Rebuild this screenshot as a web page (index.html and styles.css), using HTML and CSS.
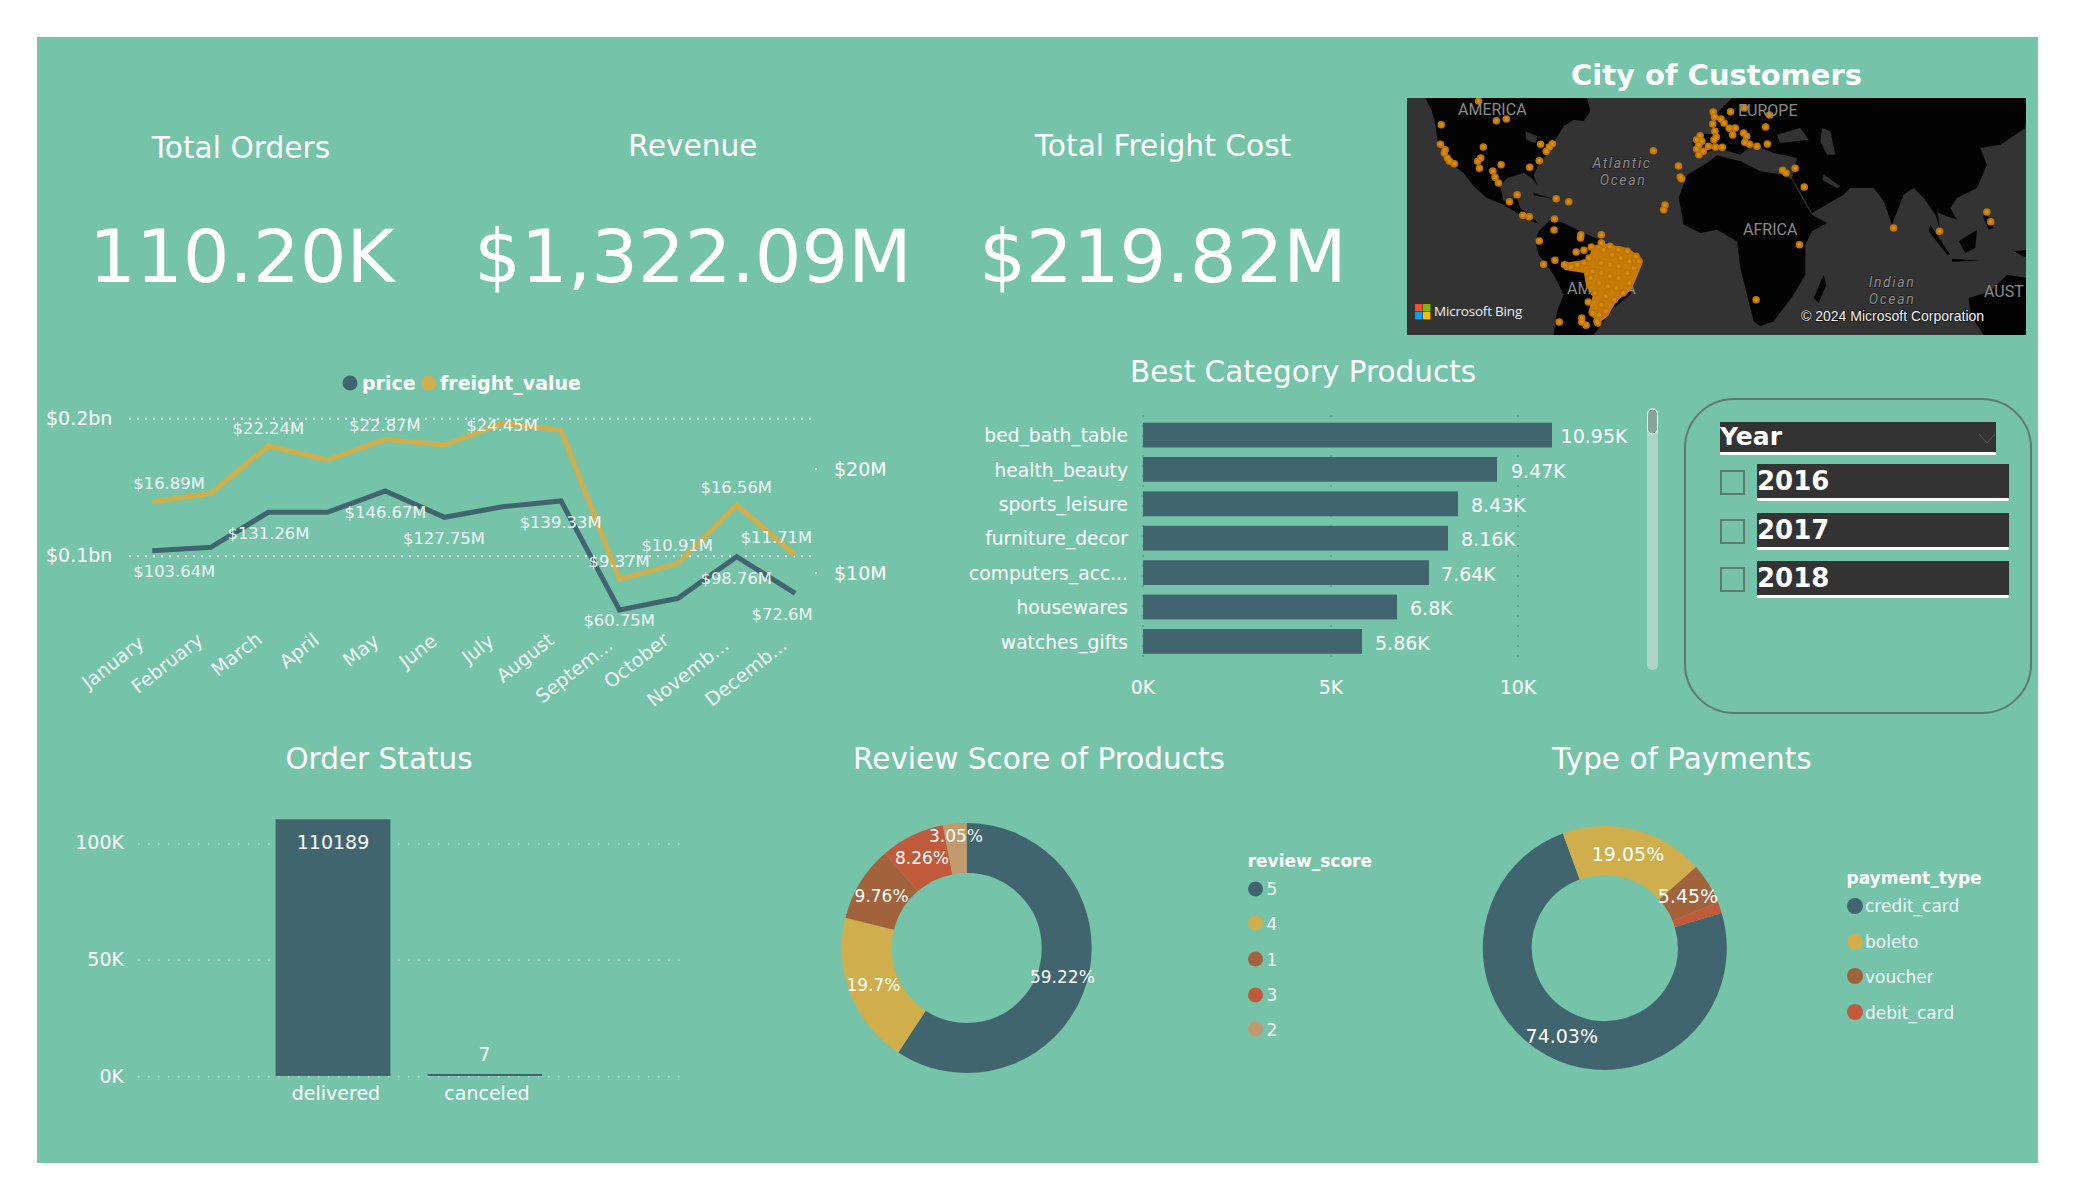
FILE: index.html
```html
<!DOCTYPE html>
<html lang="en">
<head>
<meta charset="utf-8">
<title>Sales dashboard</title>
<link rel="stylesheet" href="styles.css">
</head>
<body>
<main class="report">

  <section class="row row-top">
    <div class="kpi kpi-orders"><h3 class="kpi-label">Total Orders</h3><div class="kpi-value">110.20K</div></div>
    <div class="kpi kpi-revenue"><h3 class="kpi-label">Revenue</h3><div class="kpi-value">$1,322.09M</div></div>
    <div class="kpi kpi-freight"><h3 class="kpi-label">Total Freight Cost</h3><div class="kpi-value">$219.82M</div></div>
    <div class="map-col">
      <h2 class="map-title">City of Customers</h2>
      <svg class="map" viewBox="0 0 619 237" width="619" height="237">
        <defs>
          <path id="dots" d="M227 214h.1M268 273h.1M291 268h.1M141 285h.1M139 344h.1M150 360h.1M148 370h.1M155 385h.1M160 395h.1M171 402h.1M238 352h.1M370 344h.1M397 342h.1M390 352h.1M383 365h.1M367 393h.1M345 413h.1M279 405h.1M232 385h.1M225 395h.1M229 416h.1M260 424h.1M265 443h.1M273 460h.1M316 495h.1M298 516h.1M329 557h.1M344 561h.1M406 507h.1M435 516h.1M402 568h.1M401 601h.1M367 634h.1M463 615h.1M462 625h.1M510 615h.1M452 667h.1M377 704h.1M403 692h.1M630 363h.1M688 409h.1M692 442h.1M695 447h.1M657 526h.1M654 540h.1M768 247h.1M771 262h.1M786 268h.1M793 280h.1M767 283h.1M808 246h.1M840 235h.1M898 256h.1M889 292h.1M805 296h.1M819 295h.1M772 305h.1M838 310h.1M845 320h.1M813 316h.1M775 322h.1M770 330h.1M893 343h.1M869 350h.1M852 344h.1M841 338h.1M789 353h.1M773 352h.1M757 350h.1M738 318h.1M730 330h.1M742 335h.1M735 345h.1M730 358h.1M745 365h.1M735 375h.1M928 422h.1M936 430h.1M957 416h.1M978 472h.1M1184 595h.1M1290 605h.1M1399 547h.1M1408 576h.1M967 645h.1M867 810h.1M413 877h.1M465 865h.1M465 877h.1M475 887h.1M502 880h.1M480 817h.1M425 705h.1M440 712h.1M455 705h.1M470 700h.1M487 652h.1M470 662h.1M482 685h.1M510 640h.1M530 650h.1M550 660h.1M570 665h.1M590 680h.1M597 695h.1M585 715h.1M515 660h.1M535 675h.1M555 685h.1M575 695h.1M510 700h.1M530 705h.1M550 710h.1M570 730h.1M490 725h.1M510 730h.1M530 740h.1M550 745h.1M575 760h.1M485 745h.1M505 760h.1M525 770h.1M545 775h.1M560 790h.1M495 790h.1M520 800h.1M540 810h.1M510 825h.1M490 850h.1M505 855h.1M520 845h.1M500 875h.1"/>
        </defs>
        <rect class="sea" width="619" height="237"/>
        <g class="land-group" transform="scale(.33333)">
          <polygon class="land" points="55,0 540,0 550,40 530,70 500,65 470,85 445,125 425,165 400,190 380,230 390,262 375,240 350,225 300,240 280,265 290,310 330,300 340,330 375,355 395,378 375,370 330,345 290,320 240,300 200,265 170,225 135,200 110,165 92,130 85,80 75,40"/>
          <polygon class="land" points="395,400 430,365 470,375 530,405 590,430 690,465 705,490 670,590 620,630 590,670 560,711 440,711 450,640 470,590 440,530 395,470 385,430"/>
          <polygon class="land" points="815,300 840,230 900,195 930,172 1000,190 1060,220 1130,230 1155,245 1190,310 1215,350 1260,375 1215,400 1195,440 1195,530 1160,590 1100,670 1060,685 1040,670 1000,510 990,430 930,395 880,405 830,380"/>
          <polygon class="land" points="855,135 875,105 925,110 915,60 945,30 975,0 1860,0 1855,90 1780,140 1720,150 1740,200 1710,270 1650,300 1630,330 1650,365 1620,355 1595,345 1590,330 1600,400 1585,350 1550,300 1520,270 1490,290 1455,380 1430,310 1400,270 1330,270 1310,290 1215,345 1190,300 1155,240 1170,180 1100,165 1040,140 1000,170 930,150 870,178"/>
          <polygon class="land" points="1685,600 1750,580 1800,530 1860,540 1860,711 1730,711 1690,650"/>
          <polygon class="land" points="1220,600 1250,530 1258,560 1235,615"/>
          <polygon class="land" points="1570,380 1630,470 1620,470 1565,400"/>
          <polygon class="land" points="1655,430 1710,395 1705,450 1675,465"/>
          <polygon class="land" points="1635,482 1720,488 1635,491"/>
          <polygon class="land" points="1730,330 1760,390 1745,395 1730,360"/>
          <polygon class="land" points="1820,460 1860,455 1860,480"/>
          <polygon class="land" points="380,285 450,305 380,292"/>
          <polygon class="gulf" points="1110,110 1180,90 1205,125 1120,135"/>
          <polygon class="gulf" points="1245,90 1270,100 1285,170 1260,170 1240,130"/>
          <polygon class="gulf" points="1250,230 1300,265 1290,270 1245,245"/>
          <polygon class="gulf" points="355,100 392,115 385,135 358,125"/>
        </g>
        <text class="map-label" x="160" y="190">AMERICA</text>
        <g transform="scale(.43365 .33333) translate(-62 -205)">
          <polygon class="brazil" points="515,640 570,655 600,680 605,700 580,780 545,815 525,860 505,880 480,850 490,800 475,770 470,730 425,720 420,700 450,695 480,690 490,650"/>
          <use href="#dots" class="dot-rim"/>
          <use href="#dots" class="dot-core"/>
        </g>
        <text class="map-label" x="51" y="11">AMERICA</text>
        <text class="map-label" x="331" y="12">EUROPE</text>
        <text class="map-label" x="336" y="131">AFRICA</text>
        <text class="map-label" x="577" y="193">AUST</text>
        <text class="map-ocean" x="215" y="65">Atlantic</text>
        <text class="map-ocean" x="216" y="82">Ocean</text>
        <text class="map-ocean" x="485" y="184">Indian</text>
        <text class="map-ocean" x="485" y="201">Ocean</text>
        <rect class="ms-r" x="8" y="206" width="7.4" height="7.4"/>
        <rect class="ms-g" x="16" y="206" width="7.4" height="7.4"/>
        <rect class="ms-b" x="8" y="214" width="7.4" height="7.4"/>
        <rect class="ms-y" x="16" y="214" width="7.4" height="7.4"/>
        <text class="map-brand" x="27" y="213">Microsoft Bing</text>
        <text class="map-copy" x="394" y="218">© 2024 Microsoft Corporation</text>
      </svg>
    </div>
  </section>

  <section class="row row-middle">
    <div class="visual col-line">
      <svg viewBox="37 345 904 390" width="904" height="390">
        <circle class="dark-fill" cx="350" cy="383" r="7.5"/>
        <text class="legend-strong" x="362" y="383">price</text>
        <circle class="gold-fill" cx="429" cy="383" r="7.5"/>
        <text class="legend-strong" x="440" y="383">freight_value</text>

        <line class="grid-strong" x1="129" y1="418.7" x2="814" y2="418.7"/>
        <line class="grid-strong" x1="129" y1="556.3" x2="814" y2="556.3"/>
        <text class="tick" x="46" y="418">$0.2bn</text>
        <text class="tick" x="46" y="555">$0.1bn</text>
        <text class="tick" x="834" y="469">$20M</text>
        <text class="tick" x="834" y="573">$10M</text>
        <circle class="white-fill" cx="816" cy="469" r="1"/>
        <circle class="white-fill" cx="816" cy="573" r="1"/>

        <polyline class="series series-gold" points="152.3,501.7 210.8,493.3 268.2,446 327.4,460 385.3,439.3 444.5,445 502.4,423.3 561,430 619.5,579.3 678,563.3 736.6,505 795.2,555"/>
        <polyline class="series series-dark" points="152.3,550.7 210.8,547.3 268.2,512.3 327.4,512.3 385.3,491 444.5,517.3 502.4,506.7 561,501 619.5,610 678,598.3 736.6,556.7 795.2,593.3"/>

        <text class="data" x="133.3" y="483.3">$16.89M</text>
        <text class="data" x="232.6" y="428">$22.24M</text>
        <text class="data" x="349.2" y="425">$22.87M</text>
        <text class="data" x="466.3" y="425.7">$24.45M</text>
        <text class="data" x="700.5" y="487.3">$16.56M</text>
        <text class="data" x="740.7" y="537.7">$11.71M</text>
        <text class="data" x="641.4" y="545.7">$10.91M</text>
        <text class="data" x="588.6" y="561">$9.37M</text>
        <text class="data" x="133.3" y="571.3">$103.64M</text>
        <text class="data" x="227.5" y="533.3">$131.26M</text>
        <text class="data" x="344.6" y="512.7">$146.67M</text>
        <text class="data" x="403" y="538.7">$127.75M</text>
        <text class="data" x="519.7" y="522.3">$139.33M</text>
        <text class="data" x="583.4" y="620.3">$60.75M</text>
        <text class="data" x="700.5" y="578.3">$98.76M</text>
        <text class="data" x="751.6" y="614.3">$72.6M</text>

        <text class="month" transform="translate(141 640) rotate(-38)">January</text>
        <text class="month" transform="translate(200 637) rotate(-38)">February</text>
        <text class="month" transform="translate(259 636) rotate(-38)">March</text>
        <text class="month" transform="translate(316 637) rotate(-38)">April</text>
        <text class="month" transform="translate(376 638) rotate(-38)">May</text>
        <text class="month" transform="translate(434 638) rotate(-38)">June</text>
        <text class="month" transform="translate(491 638) rotate(-38)">July</text>
        <text class="month" transform="translate(551 637) rotate(-38)">August</text>
        <text class="month" transform="translate(610 642) rotate(-38)">Septem...</text>
        <text class="month" transform="translate(666 637) rotate(-38)">October</text>
        <text class="month" transform="translate(726 642) rotate(-38)">Novemb...</text>
        <text class="month" transform="translate(784 642) rotate(-38)">Decemb...</text>
      </svg>
    </div>

    <div class="visual col-bars">
      <h2 class="title title-mid">Best Category Products</h2>
      <svg viewBox="941 399 724 336" width="724" height="336">
        <line class="grid-faint" x1="1143" y1="415" x2="1143" y2="660"/>
        <line class="grid-faint" x1="1331" y1="415" x2="1331" y2="660"/>
        <line class="grid-faint" x1="1518" y1="415" x2="1518" y2="660"/>

        <rect class="dark-fill" x="1143" y="422.7" width="409" height="24.8"/>
        <rect class="dark-fill" x="1143" y="457" width="354" height="24.8"/>
        <rect class="dark-fill" x="1143" y="491.4" width="315" height="24.8"/>
        <rect class="dark-fill" x="1143" y="525.8" width="305" height="24.8"/>
        <rect class="dark-fill" x="1143" y="560.2" width="286" height="24.8"/>
        <rect class="dark-fill" x="1143" y="594.6" width="254" height="24.8"/>
        <rect class="dark-fill" x="1143" y="629" width="219" height="24.8"/>

        <text class="cat" x="1128" y="435">bed_bath_table</text>
        <text class="cat" x="1128" y="470">health_beauty</text>
        <text class="cat" x="1128" y="504">sports_leisure</text>
        <text class="cat" x="1128" y="538">furniture_decor</text>
        <text class="cat" x="1128" y="573">computers_acc...</text>
        <text class="cat" x="1128" y="607">housewares</text>
        <text class="cat" x="1128" y="642">watches_gifts</text>

        <text class="tick" x="1560.6" y="436">10.95K</text>
        <text class="tick" x="1511" y="471">9.47K</text>
        <text class="tick" x="1471" y="505">8.43K</text>
        <text class="tick" x="1461" y="539">8.16K</text>
        <text class="tick" x="1441" y="574">7.64K</text>
        <text class="tick" x="1410" y="608">6.8K</text>
        <text class="tick" x="1375" y="643">5.86K</text>

        <text class="tick-mid" x="1143" y="687">0K</text>
        <text class="tick-mid" x="1331" y="687">5K</text>
        <text class="tick-mid" x="1518" y="687">10K</text>

        <rect class="scroll-track" x="1647" y="408" width="11" height="262" rx="5"/>
        <rect class="scroll-thumb" x="1647.5" y="409" width="10" height="25" rx="5"/>
      </svg>
    </div>

    <div class="slicer-col">
      <div class="slicer">
        <div class="slicer-head">
          <span>Year</span>
          <svg class="chevron" viewBox="0 0 16 10" width="16" height="10"><polyline points="0,0 8,9 16,0"/></svg>
        </div>
        <div class="slicer-item"><span class="check"></span><span class="slicer-text">2016</span></div>
        <div class="slicer-item"><span class="check"></span><span class="slicer-text">2017</span></div>
        <div class="slicer-item"><span class="check"></span><span class="slicer-text">2018</span></div>
      </div>
    </div>
  </section>

  <section class="row row-bottom">
    <div class="visual col-status">
      <h2 class="title">Order Status</h2>
      <svg viewBox="37 781 684 382" width="684" height="382">
        <line class="grid-soft" x1="138" y1="844" x2="686" y2="844"/>
        <line class="grid-soft" x1="138" y1="960.3" x2="686" y2="960.3"/>
        <line class="grid-soft" x1="138" y1="1076.7" x2="686" y2="1076.7"/>
        <rect class="dark-fill" x="275.6" y="819.3" width="114.8" height="256.7"/>
        <rect class="dark-fill" x="427.6" y="1074" width="114.4" height="2"/>
        <text class="tick-end" x="124" y="842">100K</text>
        <text class="tick-end" x="124" y="959">50K</text>
        <text class="tick-end" x="124" y="1076">0K</text>
        <text class="tick-mid" x="333" y="842">110189</text>
        <text class="tick-mid" x="484.5" y="1054">7</text>
        <text class="tick-mid" x="336" y="1093">delivered</text>
        <text class="tick-mid" x="487" y="1093">canceled</text>
      </svg>
    </div>

    <div class="visual col-review">
      <h2 class="title">Review Score of Products</h2>
      <svg viewBox="721 781 636 382" width="636" height="382">
        <g transform="rotate(-90 966.7 948)">
          <circle class="slice slice-r stroke-dark" cx="966.7" cy="948" r="100" pathLength="100" stroke-dasharray="59.22 100" stroke-dashoffset="0"/>
          <circle class="slice slice-r stroke-gold" cx="966.7" cy="948" r="100" pathLength="100" stroke-dasharray="19.7 100" stroke-dashoffset="-59.22"/>
          <circle class="slice slice-r stroke-brown" cx="966.7" cy="948" r="100" pathLength="100" stroke-dasharray="9.76 100" stroke-dashoffset="-78.92"/>
          <circle class="slice slice-r stroke-red" cx="966.7" cy="948" r="100" pathLength="100" stroke-dasharray="8.26 100" stroke-dashoffset="-88.68"/>
          <circle class="slice slice-r stroke-tan" cx="966.7" cy="948" r="100" pathLength="100" stroke-dasharray="3.06 100" stroke-dashoffset="-96.94"/>
        </g>
        <text class="pct" x="956" y="836">3.05%</text>
        <text class="pct" x="922" y="858">8.26%</text>
        <text class="pct" x="881.6" y="896">9.76%</text>
        <text class="pct" x="873.5" y="985">19.7%</text>
        <text class="pct" x="1062.4" y="977">59.22%</text>

        <text class="legend-head" x="1247.7" y="861">review_score</text>
        <circle class="dark-fill" cx="1255.5" cy="889" r="7.5"/><text class="legend-item" x="1266.5" y="889">5</text>
        <circle class="gold-fill" cx="1255.5" cy="923" r="7.5"/><text class="legend-item" x="1266.5" y="924">4</text>
        <circle class="brown-fill" cx="1255.5" cy="959" r="7.5"/><text class="legend-item" x="1266.5" y="960">1</text>
        <circle class="red-fill" cx="1255.5" cy="995" r="7.5"/><text class="legend-item" x="1266.5" y="995">3</text>
        <circle class="tan-fill" cx="1255.5" cy="1029" r="7.5"/><text class="legend-item" x="1266.5" y="1030">2</text>
      </svg>
    </div>

    <div class="visual col-payments">
      <h2 class="title">Type of Payments</h2>
      <svg viewBox="1357 781 650 382" width="650" height="382">
        <g transform="rotate(-16.7 1604.8 948)">
          <circle class="slice slice-p stroke-dark" cx="1604.8" cy="948" r="97.5" pathLength="100" stroke-dasharray="74.03 100" stroke-dashoffset="0"/>
          <circle class="slice slice-p stroke-gold" cx="1604.8" cy="948" r="97.5" pathLength="100" stroke-dasharray="19.05 100" stroke-dashoffset="-74.03"/>
          <circle class="slice slice-p stroke-brown" cx="1604.8" cy="948" r="97.5" pathLength="100" stroke-dasharray="5.45 100" stroke-dashoffset="-93.08"/>
          <circle class="slice slice-p stroke-red" cx="1604.8" cy="948" r="97.5" pathLength="100" stroke-dasharray="1.47 100" stroke-dashoffset="-98.53"/>
        </g>
        <text class="pct pct-lg" x="1628" y="854">19.05%</text>
        <text class="pct pct-lg" x="1688" y="896">5.45%</text>
        <text class="pct pct-lg" x="1561.8" y="1036">74.03%</text>

        <text class="legend-head" x="1846.5" y="878">payment_type</text>
        <circle class="dark-fill" cx="1855" cy="906" r="8"/><text class="legend-item" x="1865" y="906">credit_card</text>
        <circle class="gold-fill" cx="1855" cy="942" r="8"/><text class="legend-item" x="1865" y="942">boleto</text>
        <circle class="brown-fill" cx="1855" cy="976" r="8"/><text class="legend-item" x="1865" y="977">voucher</text>
        <circle class="red-fill" cx="1855" cy="1012" r="8"/><text class="legend-item" x="1865" y="1013">debit_card</text>
      </svg>
    </div>
  </section>
</main>
</body>
</html>
```

FILE: styles.css
```css
:root {
  --bg: #75c4a9;
  --dark: #41656e;
  --gold: #cfae4b;
  --brown: #a1623c;
  --red: #c05a3b;
  --tan: #c39a6b;
}

* { box-sizing: border-box; }

html, body { margin: 0; padding: 0; background: #fff; }

body { padding: 37px; font-family: "DejaVu Sans", sans-serif; color: #fff; }

svg { display: block; overflow: visible; }
svg text { font-family: "DejaVu Sans", sans-serif; fill: #fff; dominant-baseline: central; }

.report {
  width: 2001px;
  height: 1126px;
  background: var(--bg);
  display: grid;
  grid-template-rows: 308px 390px 428px;
}

.row { display: flex; }

/* KPI row */
.kpi { text-align: center; }
.kpi-orders { width: 408px; padding-top: 93px; }
.kpi-revenue { width: 496px; padding-top: 91px; }
.kpi-freight { width: 444px; padding-top: 91px; }
.kpi-label { margin: 0; height: 36px; line-height: 36px; font-size: 29.7px; font-weight: 400; }
.kpi-value { margin-top: 48px; height: 90px; line-height: 90px; font-size: 73.5px; }
.kpi-orders .kpi-value { margin-top: 46px; padding-left: 2px; }

.map-col { width: 653px; padding: 20px 12px 0 22px; }
.map-title { margin: 0; height: 41px; line-height: 36px; font-size: 29px; font-weight: 700; text-align: center; }
.map { background: #333; overflow: hidden; }
.sea { fill: #333; }
.land-group { filter: blur(2px); }
.land { fill: #030303; }
.gulf { fill: #333; }
.brazil { fill: #c87c08; }
.dot-rim { fill: none; stroke: #bd7506; stroke-width: 7.5; stroke-linecap: round; vector-effect: non-scaling-stroke; }
.dot-core { fill: none; stroke: #dc8a0e; stroke-width: 4; stroke-linecap: round; vector-effect: non-scaling-stroke; }
#dots { vector-effect: non-scaling-stroke; }
svg .map-label { font-family: Roboto, sans-serif; font-size: 16px; fill: #8a8a8a; }
svg .map-ocean { font-family: Roboto, sans-serif; font-size: 14px; font-style: italic; letter-spacing: 1.6px; fill: #8f8f8f; text-anchor: middle; paint-order: stroke; stroke: #1c1c1c; stroke-width: 1.5px; }
svg .map-brand { font-family: "Open Sans", sans-serif; font-size: 13.5px; letter-spacing: -.2px; fill: #f0f0f0; }
svg .map-copy { font-family: "Liberation Sans", sans-serif; font-size: 14px; fill: #f4f4f4; paint-order: stroke; stroke: #111; stroke-width: 1.5px; }
.ms-r { fill: #f25022; }
.ms-g { fill: #7fba00; }
.ms-b { fill: #00a4ef; }
.ms-y { fill: #ffb900; }

/* Shared chart bits */
.title { margin: 0; height: 46px; padding-top: 2px; line-height: 44px; font-size: 29.5px; font-weight: 400; text-align: center; }
.title-mid { height: 54px; padding-top: 0; line-height: 54px; }

.dark-fill { fill: var(--dark); }
.gold-fill { fill: var(--gold); }
.brown-fill { fill: var(--brown); }
.red-fill { fill: var(--red); }
.tan-fill { fill: var(--tan); }
.white-fill { fill: #fff; }

svg .tick { font-size: 19px; }
svg .tick-mid { font-size: 19px; text-anchor: middle; }
svg .tick-end { font-size: 19px; text-anchor: end; }
svg .cat { font-size: 18.7px; text-anchor: end; }
svg .data { font-size: 16.4px; fill: #f2fbf8; }
svg .month { font-size: 19px; text-anchor: end; fill: #f2fbf8; }
svg .legend-strong { font-size: 19px; font-weight: 700; }
svg .legend-head { font-size: 17px; font-weight: 700; }
svg .legend-item { font-size: 17px; fill: #f2fbf8; }
svg .pct { font-size: 17px; text-anchor: middle; }
svg .pct-lg { font-size: 19px; }

.grid-strong { stroke: #fff; stroke-width: 2; stroke-dasharray: 2 6; }
.grid-faint { stroke: #4f8a78; stroke-width: 1; stroke-dasharray: 2 8; }
.grid-soft { stroke: #b5e0d1; stroke-width: 1.5; stroke-dasharray: 1.5 8.5; }

.series { fill: none; stroke-width: 5; stroke-linejoin: miter; }
.series-gold { stroke: var(--gold); }
.series-dark { stroke: var(--dark); }

.scroll-track { fill: #abd5c7; }
.scroll-thumb { fill: #86a598; stroke: #fff; stroke-width: 1; }

/* Columns */
.col-line { width: 904px; }
.col-bars { width: 724px; }
.col-status { width: 684px; }
.col-review { width: 636px; }
.col-payments { width: 650px; }

/* Slicer */
.slicer-col { width: 373px; padding: 53px 6px 0 19px; }
.slicer {
  height: 316px;
  border: 2px solid #5f7a70;
  border-radius: 50px;
  padding: 22px 0 0 34px;
}
.slicer-head {
  width: 276px;
  height: 33px;
  background: #333;
  border-bottom: 3px solid #fff;
  font-size: 25px;
  font-weight: 700;
  line-height: 30px;
  display: flex;
  align-items: center;
  justify-content: space-between;
}
.chevron { margin-right: 1px; margin-top: 4px; fill: none; stroke: #5c5c5c; stroke-width: 1; }
.slicer-item { display: flex; align-items: center; gap: 12px; width: 289px; margin-top: 11.5px; }
.slicer-head + .slicer-item { margin-top: 9px; }
.check { width: 25px; height: 25px; border: 2px solid #5f7a70; flex: none; }
.slicer-text {
  flex: 1;
  height: 37px;
  background: #333;
  border-bottom: 3px solid #fff;
  font-size: 26px;
  font-weight: 700;
  line-height: 34px;
}

/* Donuts */
.slice { fill: none; }
.slice-r { stroke-width: 50; }
.slice-p { stroke-width: 49; }
.stroke-dark { stroke: var(--dark); }
.stroke-gold { stroke: var(--gold); }
.stroke-brown { stroke: var(--brown); }
.stroke-red { stroke: var(--red); }
.stroke-tan { stroke: var(--tan); }
```
